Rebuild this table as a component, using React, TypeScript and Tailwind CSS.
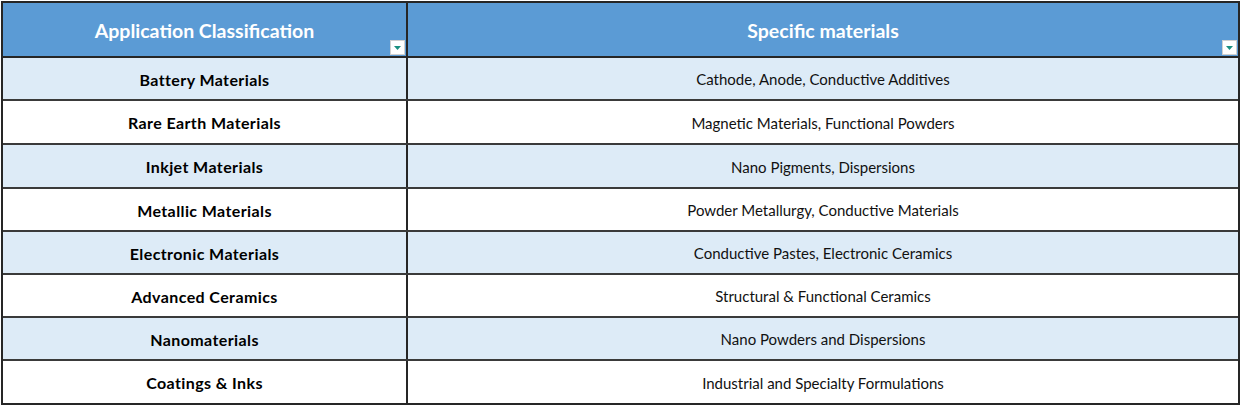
import React from "react";

const rows = [
  ["Battery Materials", "Cathode, Anode, Conductive Additives", "h-[43px]"],
  ["Rare Earth Materials", "Magnetic Materials, Functional Powders", "h-[44px]"],
  ["Inkjet Materials", "Nano Pigments, Dispersions", "h-[44px]"],
  ["Metallic Materials", "Powder Metallurgy, Conductive Materials", "h-[43px]"],
  ["Electronic Materials", "Conductive Pastes, Electronic Ceramics", "h-[43px]"],
  ["Advanced Ceramics", "Structural & Functional Ceramics", "h-[43px]"],
  ["Nanomaterials", "Nano Powders and Dispersions", "h-[43px]"],
  ["Coatings & Inks", "Industrial and Specialty Formulations", "h-[42px]"],
];

const FilterButton = () => (
  <span className="absolute right-[1px] bottom-[1px] flex h-[15px] w-[15px] items-center justify-center bg-white border border-[#d0d0d0]">
    <svg width="7" height="4" viewBox="0 0 7 4">
      <path d="M0 0h7L3.5 4z" fill="#1a8f80" />
    </svg>
  </span>
);

const App = () => {
  return (
    <div className="bg-white w-[1243px] h-[405px] pt-[1px] pl-[1px]" style={{ fontFamily: "Lato, 'Open Sans', sans-serif" }}>
      <div className="w-[1239px] border-2 border-[#262626]">
        <div className="grid grid-cols-[405px_1fr] h-[55px] bg-[#5b9bd5] border-b-2 border-[#262626]">
          <div className="relative flex items-center justify-center border-r-2 border-[#262626] text-white font-bold text-[19.5px] pt-[3px]">
            Application Classification
            <FilterButton />
          </div>
          <div className="relative flex items-center justify-center text-white font-bold text-[19.5px] pt-[3px]">
            Specific materials
            <FilterButton />
          </div>
        </div>
        {rows.map(([a, b, h], i) => (
          <div
            key={a}
            className={`grid grid-cols-[405px_1fr] ${h} ${i % 2 === 0 ? "bg-[#ddebf7]" : "bg-white"} ${i < rows.length - 1 ? "border-b-2 border-[#3a3a3a]" : ""}`}
          >
            <div className="flex items-center justify-center border-r-2 border-[#262626] font-bold text-[16px] tracking-[0.4px] text-black pt-[2px]">{a}</div>
            <div className="flex items-center justify-center text-[15px] text-[#111] pt-[2px]">{b}</div>
          </div>
        ))}
      </div>
    </div>
  );
};

export default App;
